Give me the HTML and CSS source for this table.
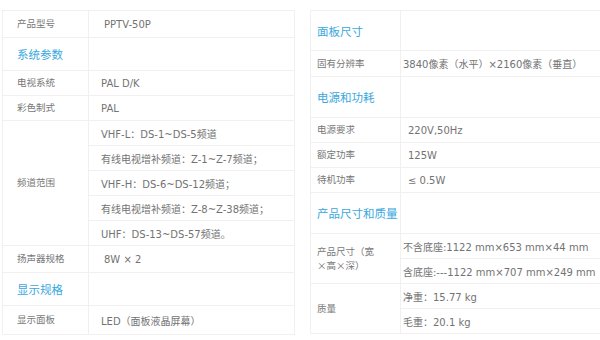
FILE: index.html
```html
<!DOCTYPE html>
<html lang="zh-CN">
<head>
<meta charset="utf-8">
<title>PPTV-50P 参数</title>
<link rel="stylesheet" href="styles.css">
</head>
<body>
<div class="page">
  <table class="spec spec-left">
    <colgroup><col class="col-label"><col></colgroup>
    <tr class="h27"><td class="label">产品型号</td><td class="value pad3">PPTV-50P</td></tr>
    <tr class="h33"><td class="head">系统参数</td><td></td></tr>
    <tr class="h25"><td class="label">电视系统</td><td class="value">PAL D/K</td></tr>
    <tr class="h25"><td class="label">彩色制式</td><td class="value">PAL</td></tr>
    <tr class="h25"><td class="label" rowspan="5">频道范围</td><td class="value">VHF-L：DS-1~DS-5频道</td></tr>
    <tr class="h25"><td class="value">有线电视增补频道：Z-1~Z-7频道；</td></tr>
    <tr class="h25"><td class="value">VHF-H：DS-6~DS-12频道；</td></tr>
    <tr class="h25"><td class="value">有线电视增补频道：Z-8~Z-38频道；</td></tr>
    <tr class="h25"><td class="value">UHF：DS-13~DS-57频道。</td></tr>
    <tr class="h27"><td class="label">扬声器规格</td><td class="value pad3">8W × 2</td></tr>
    <tr class="h33"><td class="head">显示规格</td><td></td></tr>
    <tr class="h29"><td class="label">显示面板</td><td class="value">LED（面板液晶屏幕）</td></tr>
  </table>

  <table class="spec spec-right">
    <colgroup><col class="col-label"><col></colgroup>
    <tr class="h40"><td class="head">面板尺寸</td><td></td></tr>
    <tr class="h26"><td class="label">固有分辨率</td><td class="value">3840像素（水平）×2160像素（垂直）</td></tr>
    <tr class="h41"><td class="head">电源和功耗</td><td></td></tr>
    <tr class="h25"><td class="label">电源要求</td><td class="value pad3">220V,50Hz</td></tr>
    <tr class="h25"><td class="label">额定功率</td><td class="value pad3">125W</td></tr>
    <tr class="h25"><td class="label">待机功率</td><td class="value pad3">≤ 0.5W</td></tr>
    <tr class="h41"><td class="head">产品尺寸和质量</td><td></td></tr>
    <tr class="h25"><td class="label" rowspan="2">产品尺寸（宽<br>×高×深）</td><td class="value">不含底座:1122 mm×653 mm×44 mm</td></tr>
    <tr class="h25"><td class="value">含底座:---1122 mm×707 mm×249 mm</td></tr>
    <tr class="h25"><td class="label" rowspan="2">质量</td><td class="value">净重：15.77 kg</td></tr>
    <tr class="h25"><td class="value">毛重：20.1 kg</td></tr>
  </table>
</div>
</body>
</html>
```

FILE: styles.css
```css
html, body {
  margin: 0;
  padding: 0;
  background: #ffffff;
  overflow: hidden;
}

.page {
  width: 600px;
  height: 340px;
  overflow: hidden;
  display: flex;
  align-items: flex-start;
  gap: 15px;
  padding: 10px 0 0 2px;
  box-sizing: border-box;
}

.spec {
  border-collapse: collapse;
  table-layout: fixed;
  flex: none;
}

.spec td {
  border: 1px solid #f0f0f0;
  padding: 0;
  vertical-align: middle;
  white-space: nowrap;
}

.spec-left { width: 293px; }
.spec-right { width: 300px; }

.spec-left .col-label { width: 86px; }
.spec-right .col-label { width: 90px; }

.label {
  font-family: "Noto Sans CJK SC", "Liberation Sans", sans-serif;
  font-size: 9.5px;
  line-height: 1.45;
  color: #777777;
}

.value {
  font-family: "DejaVu Sans", "Noto Sans CJK SC", sans-serif;
  font-size: 10px;
  color: #737373;
}

.head {
  font-family: "Noto Sans CJK SC", "Liberation Sans", sans-serif;
  font-size: 11.5px;
  color: #3aa8de;
}

.spec-left .label,
.spec-left .head { padding-left: 14px; }
.spec-left .value { padding-left: 12px; }

.spec-right .label,
.spec-right .head { padding-left: 6px; }
.spec-right .value { padding-left: 2px; }

.spec-left .value.pad3 { padding-left: 15px; }
.spec-right .value.pad3 { padding-left: 7px; }

.h25 { height: 25px; }
.h26 { height: 26px; }
.h27 { height: 27px; }
.h29 { height: 29px; }
.h33 { height: 33px; }
.h40 { height: 40px; }
.h41 { height: 41px; }
```
